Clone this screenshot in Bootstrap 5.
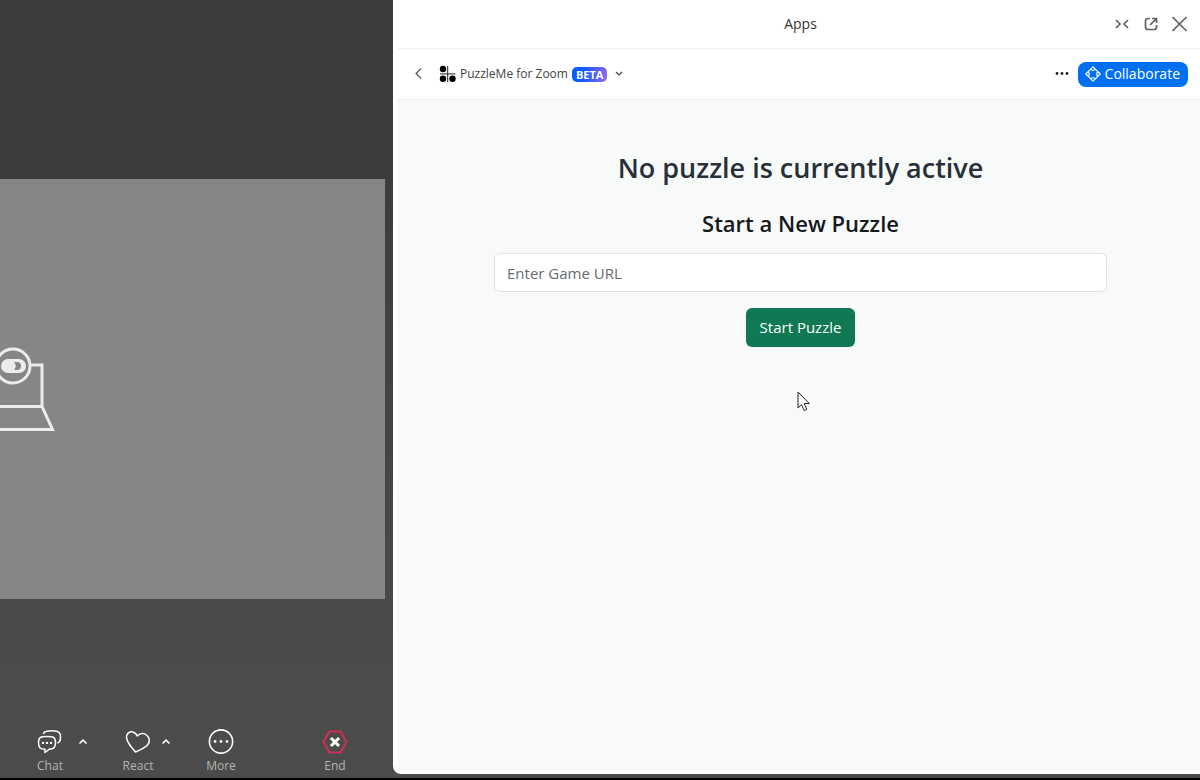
<!DOCTYPE html>
<html lang="en">
<head>
<meta charset="utf-8">
<meta name="viewport" content="width=device-width, initial-scale=1">
<title>PuzzleMe for Zoom</title>
<link href="https://cdn.jsdelivr.net/npm/bootstrap@5.3.0/dist/css/bootstrap.min.css" rel="stylesheet">
<style>
  body { font-family: "Open Sans", "Noto Sans", sans-serif; background: #000; }
  svg { display: block; flex: none; }
  .meeting { background: linear-gradient(#3d3d3d 0%, #3d3d3d 25%, #4c4c4c 90%, #4b4b4b 100%); border-bottom: 2px solid #000; }
  .stage { width: 32.75%; }
  .space-top { flex: 179 1 0; }
  .video { flex: 420 1 0; margin-right: 8px; background: #868688; }
  .space-low { flex: 129 1 0; }
  .tools { height: 50px; padding-left: 35px; padding-right: 43px; }
  .tool { width: 30px; font-size: 12px; line-height: 16px; color: #b4b4b4; }
  .tool svg { margin-bottom: 2px; }
  .tool svg, .caret svg { color: #fff; }
  .caret { height: 28px; margin-left: 13px; }
  .caret-near { margin-left: 8px; }
  .tool-next { margin-left: 35px; }
  .icon-btn { background: none; border: 0; padding: 0; }
  .panel { background: #fff; border-radius: 0 0 0 8px; margin-bottom: 4px; padding: 0 0 4px 4px; min-width: 0; }
  .title-bar { height: 49px; border-bottom: 1px solid #f0f1f1; color: #5f6368; }
  .title-bar h1 { font-size: 14px; line-height: 20px; color: #333; }
  .window-tools { right: 12px; gap: 12px; }
  .app-bar { height: 51px; border-bottom: 1px solid #eff1f1; padding: 0 12px 0 17px; color: #444; font-size: 12px; }
  .beta { font-size: 11px; line-height: 15px; padding: 0 4px; border-radius: 5px; background: linear-gradient(100deg, #0b5cff 30%, #9468f5); }
  .collab { height: 25px; padding: 0 8px 0 7px; border: 0; border-radius: 8px; background: #0070f3; font-size: 14px; line-height: 20px; gap: 4px; }
  .content { background: #f8faf9; padding: 50px 93px 0 97px; }
  .content h2 { font-size: 27px; line-height: 36px; font-weight: 600; color: #273039; margin-bottom: 23px; }
  .content h3 { font-size: 22px; line-height: 28px; font-weight: 600; color: #15191c; margin-bottom: 16px; }
  .field { height: 39px; font-size: 15px; border-color: #dee2e6; }
  .field::placeholder { color: #666b70; }
  .start { height: 39px; font-size: 15px; padding: 0 14px; background: #107852; border: 0; color: #fff; }
  .pointer { left: 50%; top: 291px; margin-left: -2px; }
</style>
</head>
<body>
<div class="meeting d-flex vh-100 overflow-hidden">
  <section class="stage d-flex flex-column flex-shrink-0" aria-label="Meeting">
    <div class="space-top"></div>
    <div class="video d-flex align-items-center">
      <svg width="56" height="86" viewBox="0 0 56 86" fill="none" stroke="#ececec" stroke-width="3" aria-hidden="true">
        <circle cx="13" cy="20" r="17"/>
        <path d="M30 19H42V60M0 60.500H42L52.500 83.500H0"/>
        <rect x="1" y="13" width="25" height="14" rx="7" fill="#ececec" stroke="none"/>
        <path d="M14 16H17A4 4 0 0 1 17 24H14Q17.500 20 14 16Z" fill="#868688" stroke="none"/>
      </svg>
    </div>
    <div class="space-low"></div>
    <nav class="tools d-flex align-items-start" aria-label="Meeting controls">
      <button class="icon-btn tool d-flex flex-column align-items-center">
        <svg width="26" height="28" viewBox="0 0 26 28" fill="none" stroke="currentColor" stroke-width="1.500" stroke-linejoin="round" stroke-linecap="round">
          <path d="M6.500 5.500C7 4 8 3.500 9.500 3.200C12.500 2.700 16.500 2.700 19.500 3.200C22.500 3.700 23.500 5.500 23.500 8.500C23.500 12 23.500 14 21 14.700"/>
          <path d="M1.500 14.500C1.500 10 3 9 5.500 8.800C8.500 8.500 11.500 8.500 14.500 8.800C17.500 9 18.500 10.500 18.500 14.500C18.500 18.500 17.500 20.500 14.500 21H12.500L8 24.500V21.200C3 21 1.500 19.500 1.500 14.500Z"/>
          <g fill="currentColor" stroke="none"><circle cx="6" cy="14.900" r="1.200"/><circle cx="10" cy="14.900" r="1.200"/><circle cx="14" cy="14.900" r="1.200"/></g>
        </svg>Chat
      </button>
      <button class="icon-btn caret d-flex align-items-center" aria-label="Chat options"><svg width="10" height="10" viewBox="0 0 10 10" fill="none" stroke="currentColor" stroke-width="1.600"><path d="M1.500 6.500L5 3.200L8.500 6.500"/></svg></button>
      <button class="icon-btn tool tool-next d-flex flex-column align-items-center">
        <svg width="26" height="28" viewBox="0 0 26 28" fill="none" stroke="currentColor" stroke-width="1.500" stroke-linejoin="round"><path d="M10.500 24C6 19 2.500 15 1.700 10.500C.8 5.500 5 2.500 9 4.500C10.500 5.200 11.500 6.300 12.200 8C14.500 5.500 18.500 4.500 21.500 7C24.500 9.500 25.500 13.500 22.500 17C20 20 15.500 21.500 10.500 24Z"/></svg>React
      </button>
      <button class="icon-btn caret caret-near d-flex align-items-center" aria-label="Reaction options"><svg width="10" height="10" viewBox="0 0 10 10" fill="none" stroke="currentColor" stroke-width="1.600"><path d="M1.500 6.500L5 3.200L8.500 6.500"/></svg></button>
      <button class="icon-btn tool tool-next d-flex flex-column align-items-center">
        <svg width="26" height="28" viewBox="0 0 26 28" fill="none" stroke="currentColor" stroke-width="1.600"><circle cx="13" cy="13.500" r="11.600"/><g fill="currentColor" stroke="none"><circle cx="7" cy="13.500" r="1.400"/><circle cx="13" cy="13.500" r="1.400"/><circle cx="19" cy="13.500" r="1.400"/></g></svg>More
      </button>
      <button class="icon-btn tool d-flex flex-column align-items-center ms-auto">
        <svg width="26" height="28" viewBox="0 0 26 28" fill="none"><path d="M7.500 3.500H18.500L24.500 14L18.500 24.500H7.500L1.500 14Z" stroke="#d42d53" stroke-width="2" stroke-linejoin="round"/><path d="M9 10L17 18M17 10L9 18" stroke="#fff" stroke-width="3"/></svg>End
      </button>
    </nav>
  </section>

  <main class="panel flex-grow-1 d-flex flex-column">
    <header class="title-bar position-relative d-flex align-items-center justify-content-center flex-shrink-0">
      <h1 class="m-0 fw-normal ps-1">Apps</h1>
      <div class="window-tools position-absolute d-flex align-items-center">
        <button class="icon-btn" aria-label="Collapse"><svg width="18" height="16" viewBox="0 0 18 16" fill="none" stroke="#5f6368" stroke-width="1.700"><path d="M2 4L6 8L2 12M14 4L10 8L14 12"/></svg></button>
        <button class="icon-btn" aria-label="Pop out"><svg width="16" height="16" viewBox="0 0 16 16" fill="none" stroke="#5f6368" stroke-width="1.700"><path d="M6 2.500H4Q1.500 2.500 1.500 5V11Q1.500 13.500 4 13.500H10Q12.500 13.500 12.500 11V9M8 2.500H12.500V7M12.500 2.500L6 9"/></svg></button>
        <button class="icon-btn" aria-label="Close"><svg width="16" height="16" viewBox="0 0 16 16" fill="none" stroke="#5f6368" stroke-width="1.700"><path d="M.500 1L14.500 15M14.500 1L.500 15"/></svg></button>
      </div>
    </header>
    <div class="app-bar d-flex align-items-center flex-shrink-0">
      <button class="icon-btn" aria-label="Back"><svg width="8" height="12" viewBox="0 0 8 12" fill="none" stroke="#555" stroke-width="1.200"><path d="M7 .500L2 5.500L7 10.500"/></svg></button>
      <svg class="ms-3 me-1" width="18" height="18" viewBox="0 0 18 18" aria-hidden="true"><g fill="#000"><circle cx="5" cy="4" r="3.200"/><circle cx="5" cy="13.800" r="3.200"/><circle cx="14.500" cy="13.800" r="3.200"/></g><path d="M9.700 1V17M2 8.900H17.500" stroke="#222"/></svg>
      <span>PuzzleMe for Zoom</span>
      <span class="beta text-white fw-bold ms-1">BETA</span>
      <button class="icon-btn ms-1 ps-1" aria-label="App menu"><svg width="10" height="8" viewBox="0 0 10 8" fill="none" stroke="#444" stroke-width="1.200"><path d="M1 2L4 5L7 2"/></svg></button>
      <button class="icon-btn ms-auto me-2" aria-label="More options"><svg width="16" height="8" viewBox="0 0 16 8" fill="#222"><circle cx="3" cy="3.500" r="1.400"/><circle cx="8" cy="3.500" r="1.400"/><circle cx="13" cy="3.500" r="1.400"/></svg></button>
      <button class="collab text-white d-flex align-items-center">
        <svg width="16" height="16" viewBox="0 0 16 16" fill="none" stroke="#fff" stroke-width="1.100" stroke-linejoin="round"><path d="M8 .800L15.200 8L8 15.200L.800 8Z"/><path d="M5.500 3.300Q8 5.300 10.500 3.300M12.700 5.500Q10.700 8 12.700 10.500M10.500 12.700Q8 10.700 5.500 12.700M3.300 10.500Q5.300 8 3.300 5.500"/></svg>Collaborate
      </button>
    </div>
    <div class="content position-relative flex-grow-1 text-center">
      <h2>No puzzle is currently active</h2>
      <h3>Start a New Puzzle</h3>
      <form>
        <input class="form-control field mb-3" type="url" placeholder="Enter Game URL" aria-label="Enter Game URL">
        <button class="btn start" type="button">Start Puzzle</button>
      </form>
      <svg class="pointer position-absolute" width="14" height="21" viewBox="0 0 14 21" fill="#fff" stroke="#222" stroke-linejoin="round" aria-hidden="true"><path d="M1 1V17L4.500 13.700L7.200 19.500L9.800 18.300L7.200 12.500H12.300Z"/></svg>
    </div>
  </main>
</div>
<script src="https://cdn.jsdelivr.net/npm/bootstrap@5.3.0/dist/js/bootstrap.bundle.min.js"></script>
</body>
</html>
